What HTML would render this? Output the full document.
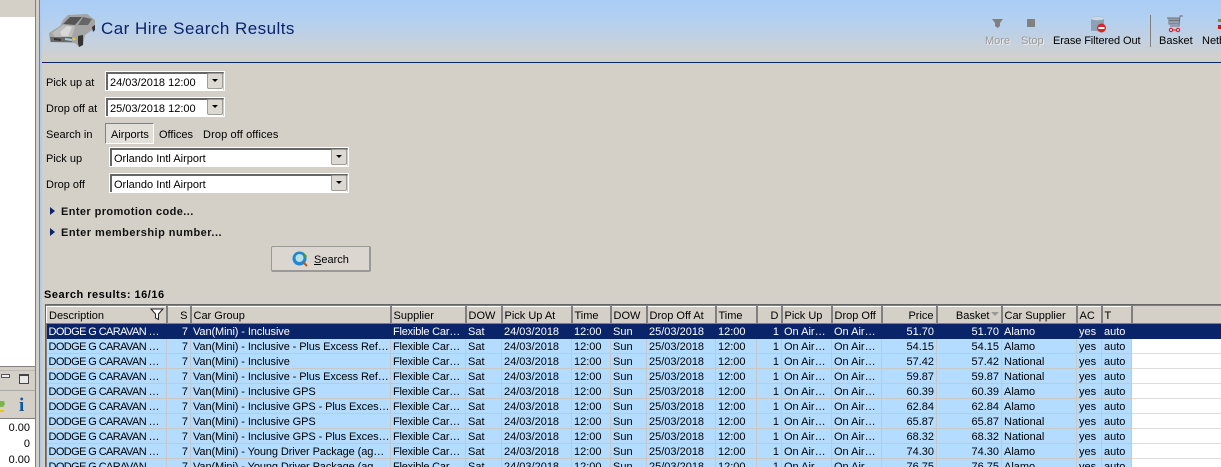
<!DOCTYPE html>
<html><head><meta charset="utf-8">
<style>
html,body{margin:0;padding:0;width:1221px;height:467px;overflow:hidden;background:#d4d0c8}
body{position:relative;font:11px "Liberation Sans",sans-serif;color:#000}
.a{position:absolute;white-space:nowrap}
.lbl{position:absolute;left:46px;line-height:14px;white-space:nowrap;margin-top:1px}
.field{position:absolute;background:#fff;border:1px solid #fff;box-sizing:border-box}
.field i{position:absolute;left:0;top:0;right:0;bottom:0;border-top:2px solid #666;border-left:2px solid #666;border-right:1px solid #ccc;box-sizing:border-box}
.field span{position:absolute;left:4px;top:4px;line-height:14px;white-space:nowrap}
.field b{position:absolute;right:1px;top:1px;width:16px;height:16px;background:#dcd8d2;border:1px solid #a09c96;border-radius:2px;box-sizing:border-box}
.field b:after{content:"";position:absolute;left:4px;top:5px;border:3px solid transparent;border-top:3px solid #000;border-bottom:0}
.tool{position:absolute;top:34px;line-height:14px;white-space:nowrap}
.tri{position:absolute;left:50px;width:0;height:0;border-left:5px solid #0a246a;border-top:4px solid transparent;border-bottom:4px solid transparent}
table{position:absolute;left:46px;top:306px;border-collapse:collapse;table-layout:fixed;width:1085px}
th,td{padding:2px 2px 0;height:15px;box-sizing:border-box;overflow:hidden;white-space:nowrap;font-weight:normal;text-align:left;line-height:12px;font-size:11px}
th{height:17px;background:#d4d0c8;border-right:2px solid #808080;border-left:1px solid #fff;border-top:1px solid #fff;border-bottom:1px solid #808080;padding-top:2px}
td{background:#b4dcff;border-right:1px solid #c8c8c8;border-bottom:1px solid #c8c8c8}
td:first-child{letter-spacing:-.6px}
td:nth-child(3){letter-spacing:-.1px}
td:nth-child(4){letter-spacing:-.2px}
.r{text-align:right}
tr.sel td{background:#0a246a;color:#fff;border-color:#0a246a}
</style></head>
<body>
<!-- left panel -->
<div class="a" style="left:0;top:0;width:35px;height:17px;background:#d4d0c8"></div>
<div class="a" style="left:0;top:17px;width:35px;height:349px;background:#fff"></div>
<div class="a" style="left:0;top:366px;width:35px;height:1px;background:#808080"></div>
<div class="a" style="left:35px;top:0;width:1px;height:467px;background:#808080"></div>
<div class="a" style="left:39px;top:0;width:1px;height:467px;background:#808080"></div>
<div class="a" style="left:40px;top:0;width:2px;height:467px;background:#a9cdf6"></div>
<div class="a" style="left:0;top:370px;width:35px;height:1px;background:#bbb"></div>
<div class="a" style="left:1px;top:374px;width:7px;height:2px;border:1px solid #555;background:#eee"></div>
<div class="a" style="left:19px;top:374px;width:8px;height:7px;border:1px solid #444;border-top:2px solid #444;background:#e8e8e8"></div>
<div class="a" style="left:0;top:390px;width:35px;height:1px;background:#aaa"></div>
<svg class="a" style="left:0;top:400px" width="6" height="14"><path d="M0 1h4l1 3-2 3H0z" fill="#7ab648"/><path d="M0 10h4v2H0z" fill="#f2c200"/></svg>
<div class="a" style="left:19px;top:396px;width:6px;font:bold 19px 'Liberation Serif',serif;color:#0a5aa8;line-height:19px">i</div>
<div class="a" style="left:0;top:418px;width:35px;height:49px;background:#fff;border-top:1px solid #808080"></div>
<div class="a" style="left:0;top:421px;width:30px;text-align:right;line-height:14px">0.00</div>
<div class="a" style="left:0;top:437px;width:30px;text-align:right;line-height:14px">0</div>
<div class="a" style="left:0;top:453px;width:30px;text-align:right;line-height:14px">0.00</div>

<!-- header -->
<div class="a" style="left:42px;top:0;width:1179px;height:62px;background:linear-gradient(#a8cdf7 0%,#b4d0ef 35%,#c6d1dd 70%,#d4d0c8 100%)"></div>
<div class="a" style="left:42px;top:62px;width:1179px;height:1px;background:#0a246a"></div>
<svg class="a" style="left:47px;top:12px" width="50" height="37" viewBox="0 0 50 37">
<path d="M2 21 13 14 16 8 21 3 40 2 48 8 48 16 38 23 36 33 32 35 28 31 3 30Z" fill="#a4a4a4"/>
<path d="M16 12 23 5 35 5 28 13Z" fill="#555"/><path d="M36 5 45 7 41 13 31 13Z" fill="#666"/>
<path d="M5 21 16 13 28 14 25 25 8 25Z" fill="#bcbcbc"/><path d="M13 20 20 14 25 15 21 24 15 24Z" fill="#d8d8d8"/>
<path d="M3 25 25 25 25 30 4 30Z" fill="#6a6a6a"/><path d="M7 26 14 27 14 29 7 28Z" fill="#333"/><path d="M18 26 25 27 25 29 18 28Z" fill="#9fd0ee"/>
<circle cx="27" cy="27" r="1.400" fill="#f0d000"/><path d="M31 24 36 23 36 33 32 35 31 31Z" fill="#333"/><path d="M45 15 48 13 48 18 46 20Z" fill="#333"/>
</svg>
<div class="a" style="left:101px;top:19px;font-size:17px;line-height:20px;color:#0a246a;letter-spacing:.46px">Car Hire Search Results</div>

<svg class="a" style="left:992px;top:18px" width="12" height="11"><path d="M0 1h11L8 5v3L5.500 10 3 8V5Z" fill="#808080"/></svg>
<div class="tool" style="left:985px;color:#999;text-shadow:1px 1px 0 #eee">More</div>
<div class="a" style="left:1027px;top:19px;width:8px;height:8px;background:#808080"></div>
<div class="tool" style="left:1021px;color:#999;text-shadow:1px 1px 0 #eee">Stop</div>
<svg class="a" style="left:1090px;top:16px" width="17" height="17"><path d="M1 2C3 0 12 0 14 2V15H1Z" fill="#8aa2b4"/><ellipse cx="7.500" cy="2.500" rx="6.500" ry="1.800" fill="#c8d8e4"/><circle cx="11.500" cy="12" r="4.500" fill="#d8262c"/><rect x="8.500" y="11" width="6" height="2" fill="#fff"/></svg>
<div class="tool" style="left:1053px;letter-spacing:-.1px">Erase Filtered Out</div>
<div class="a" style="left:1150px;top:15px;width:1px;height:32px;background:#808080"></div>
<svg class="a" style="left:1167px;top:15px" width="17" height="18"><path d="M0 3H12M2 3V9H12V3M4 3V9M6 3V9M8 3V9M10 3V9M2 5.500H12M3 11H12L13 1H16" fill="none" stroke="#707070" stroke-width="1"/><circle cx="4" cy="15" r="1.700" fill="none" stroke="#e01010"/><circle cx="11" cy="15" r="1.700" fill="none" stroke="#e01010"/><path d="M6 15H9" stroke="#e01010"/></svg>
<div class="tool" style="left:1159px">Basket</div>
<div class="a" style="left:1218px;top:19px;width:3px;height:3px;background:#6a9a30"></div>
<div class="a" style="left:1218px;top:25px;width:3px;height:4px;background:#e01010"></div>
<div class="tool" style="left:1202px">Net</div><div class="tool" style="left:1219px">b</div>

<!-- form -->
<div class="lbl" style="top:75px">Pick up at</div>
<div class="field" style="left:105px;top:71px;width:120px;height:20px"><i></i><span>24/03/2018 12:00</span><b></b></div>
<div class="lbl" style="top:101px">Drop off at</div>
<div class="field" style="left:105px;top:97px;width:120px;height:20px"><i></i><span>25/03/2018 12:00</span><b></b></div>
<div class="lbl" style="top:127px">Search in</div>
<div class="a" style="left:105px;top:123px;width:49px;height:21px;box-sizing:border-box;border:1px solid;border-color:#808080 #fff #fff #808080;background:#e2dfd9;line-height:22px;padding-left:5px">Airports</div>
<div class="a" style="left:159px;top:128px;line-height:14px">Offices</div>
<div class="a" style="left:203px;top:128px;line-height:14px;letter-spacing:.12px">Drop off offices</div>
<div class="lbl" style="top:151px">Pick up</div>
<div class="field" style="left:109px;top:147px;width:240px;height:20px"><i></i><span>Orlando Intl Airport</span><b></b></div>
<div class="lbl" style="top:177px">Drop off</div>
<div class="field" style="left:109px;top:173px;width:240px;height:20px"><i></i><span>Orlando Intl Airport</span><b></b></div>
<div class="tri" style="top:207px"></div>
<div class="a" style="left:61px;top:205px;font-weight:bold;line-height:14px;color:#111;letter-spacing:.4px">Enter promotion code...</div>
<div class="tri" style="top:228px"></div>
<div class="a" style="left:61px;top:226px;font-weight:bold;line-height:14px;color:#111;letter-spacing:.48px">Enter membership number...</div>
<div class="a" style="left:271px;top:246px;width:100px;height:26px;box-sizing:border-box;border:1px solid #999;border-right:2px solid #999;border-bottom:2px solid #999;border-radius:2px;background:#dcd6d0"></div>
<svg class="a" style="left:292px;top:251px" width="17" height="17"><circle cx="7.500" cy="7.500" r="7" fill="#1e88d8"/><circle cx="7.500" cy="7" r="4" fill="#b8e0e8"/><path d="M11 1 15 5 13 8Z" fill="#4a9a30"/><path d="M11 11 15 15" stroke="#b05a20" stroke-width="2"/></svg>
<div class="a" style="left:314px;top:253px;line-height:14px"><u>S</u>earch</div>

<div class="a" style="left:44px;top:288px;font-weight:bold;line-height:14px;letter-spacing:.5px">Search results: 16/16</div>

<!-- grid -->
<div class="a" style="left:45px;top:304px;width:1176px;height:1px;background:#666"></div>
<div class="a" style="left:45px;top:305px;width:1176px;height:1px;background:#808080"></div>
<div class="a" style="left:45px;top:304px;width:1px;height:163px;background:#666"></div>
<div class="a" style="left:46px;top:304px;width:1px;height:163px;background:#808080"></div>
<div class="a" style="left:47px;top:306px;width:1174px;height:17px;background:#d4d0c8;border-bottom:1px solid #808080"></div>
<div class="a" style="left:47px;top:324px;width:1174px;height:15px;background:#0a246a"></div>
<div class="a" style="left:1132px;top:339px;width:89px;height:128px;background:repeating-linear-gradient(#fff 0 14px,#ddd 14px 15px)"></div>
<table>
<colgroup><col style="width:120px"><col style="width:24px"><col style="width:200px"><col style="width:75px"><col style="width:36px"><col style="width:70px"><col style="width:39px"><col style="width:36px"><col style="width:69px"><col style="width:41px"><col style="width:25px"><col style="width:50px"><col style="width:50px"><col style="width:55px"><col style="width:65px"><col style="width:75px"><col style="width:25px"><col style="width:30px"></colgroup>
<tr><th>Description</th><th class="r">S</th><th>Car Group</th><th>Supplier</th><th>DOW</th><th>Pick Up At</th><th>Time</th><th>DOW</th><th>Drop Off At</th><th>Time</th><th class="r">D</th><th>Pick Up</th><th>Drop Off</th><th class="r">Price</th><th class="r" style="padding-right:11px">Basket</th><th>Car Supplier</th><th>AC</th><th>T</th></tr>
<tr class="sel"><td>DODGE G CARAVAN …</td><td class="r">7</td><td>Van(Mini) - Inclusive</td><td>Flexible Car…</td><td>Sat</td><td>24/03/2018</td><td>12:00</td><td>Sun</td><td>25/03/2018</td><td>12:00</td><td class="r">1</td><td>On Air…</td><td>On Air…</td><td class="r">51.70</td><td class="r">51.70</td><td>Alamo</td><td>yes</td><td>auto</td></tr>
<tr><td>DODGE G CARAVAN …</td><td class="r">7</td><td>Van(Mini) - Inclusive - Plus Excess Ref…</td><td>Flexible Car…</td><td>Sat</td><td>24/03/2018</td><td>12:00</td><td>Sun</td><td>25/03/2018</td><td>12:00</td><td class="r">1</td><td>On Air…</td><td>On Air…</td><td class="r">54.15</td><td class="r">54.15</td><td>Alamo</td><td>yes</td><td>auto</td></tr>
<tr><td>DODGE G CARAVAN …</td><td class="r">7</td><td>Van(Mini) - Inclusive</td><td>Flexible Car…</td><td>Sat</td><td>24/03/2018</td><td>12:00</td><td>Sun</td><td>25/03/2018</td><td>12:00</td><td class="r">1</td><td>On Air…</td><td>On Air…</td><td class="r">57.42</td><td class="r">57.42</td><td>National</td><td>yes</td><td>auto</td></tr>
<tr><td>DODGE G CARAVAN …</td><td class="r">7</td><td>Van(Mini) - Inclusive - Plus Excess Ref…</td><td>Flexible Car…</td><td>Sat</td><td>24/03/2018</td><td>12:00</td><td>Sun</td><td>25/03/2018</td><td>12:00</td><td class="r">1</td><td>On Air…</td><td>On Air…</td><td class="r">59.87</td><td class="r">59.87</td><td>National</td><td>yes</td><td>auto</td></tr>
<tr><td>DODGE G CARAVAN …</td><td class="r">7</td><td>Van(Mini) - Inclusive GPS</td><td>Flexible Car…</td><td>Sat</td><td>24/03/2018</td><td>12:00</td><td>Sun</td><td>25/03/2018</td><td>12:00</td><td class="r">1</td><td>On Air…</td><td>On Air…</td><td class="r">60.39</td><td class="r">60.39</td><td>Alamo</td><td>yes</td><td>auto</td></tr>
<tr><td>DODGE G CARAVAN …</td><td class="r">7</td><td>Van(Mini) - Inclusive GPS - Plus Exces…</td><td>Flexible Car…</td><td>Sat</td><td>24/03/2018</td><td>12:00</td><td>Sun</td><td>25/03/2018</td><td>12:00</td><td class="r">1</td><td>On Air…</td><td>On Air…</td><td class="r">62.84</td><td class="r">62.84</td><td>Alamo</td><td>yes</td><td>auto</td></tr>
<tr><td>DODGE G CARAVAN …</td><td class="r">7</td><td>Van(Mini) - Inclusive GPS</td><td>Flexible Car…</td><td>Sat</td><td>24/03/2018</td><td>12:00</td><td>Sun</td><td>25/03/2018</td><td>12:00</td><td class="r">1</td><td>On Air…</td><td>On Air…</td><td class="r">65.87</td><td class="r">65.87</td><td>National</td><td>yes</td><td>auto</td></tr>
<tr><td>DODGE G CARAVAN …</td><td class="r">7</td><td>Van(Mini) - Inclusive GPS - Plus Exces…</td><td>Flexible Car…</td><td>Sat</td><td>24/03/2018</td><td>12:00</td><td>Sun</td><td>25/03/2018</td><td>12:00</td><td class="r">1</td><td>On Air…</td><td>On Air…</td><td class="r">68.32</td><td class="r">68.32</td><td>National</td><td>yes</td><td>auto</td></tr>
<tr><td>DODGE G CARAVAN …</td><td class="r">7</td><td>Van(Mini) - Young Driver Package (ag…</td><td>Flexible Car…</td><td>Sat</td><td>24/03/2018</td><td>12:00</td><td>Sun</td><td>25/03/2018</td><td>12:00</td><td class="r">1</td><td>On Air…</td><td>On Air…</td><td class="r">74.30</td><td class="r">74.30</td><td>Alamo</td><td>yes</td><td>auto</td></tr>
<tr><td>DODGE G CARAVAN …</td><td class="r">7</td><td>Van(Mini) - Young Driver Package (ag…</td><td>Flexible Car…</td><td>Sat</td><td>24/03/2018</td><td>12:00</td><td>Sun</td><td>25/03/2018</td><td>12:00</td><td class="r">1</td><td>On Air…</td><td>On Air…</td><td class="r">76.75</td><td class="r">76.75</td><td>Alamo</td><td>yes</td><td>auto</td></tr>
</table>
<svg class="a" style="left:150px;top:308px" width="14" height="13"><path d="M1 1H13L8.500 6V11.500L5.500 10V6Z" fill="#fff" stroke="#222"/></svg>
<svg class="a" style="left:991px;top:312px" width="9" height="5"><path d="M0 0H8L4 4Z" fill="#999"/></svg>
</body></html>
